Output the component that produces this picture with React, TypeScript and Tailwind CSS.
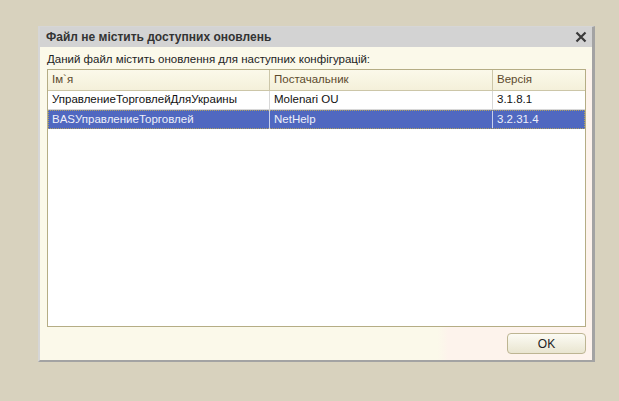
import React from "react";

const rows = [
  { name: "УправлениеТорговлейДляУкраины", vendor: "Molenari OU", ver: "3.1.8.1", sel: false },
  { name: "BASУправлениеТорговлей", vendor: "NetHelp", ver: "3.2.31.4", sel: true },
];

export default function App() {
  return (
    <div
      className="w-[619px] h-[401px] bg-[#d8d2be] pl-[38px] pt-[26px] overflow-hidden"
      style={{ fontFamily: '"Liberation Sans", Arial, sans-serif' }}
    >
      <div className="w-[557px] h-[336px] flex flex-col border-l-2 border-t border-[#d6d6d6] border-r-[3px] border-b-2 border-r-[#a3a3a3] border-b-[#a3a3a3] bg-[#fbf9ea]">
        <div className="h-[20px] shrink-0 bg-[#d3d3d3] flex items-center justify-between pl-[6px] pr-[5px]">
          <span className="text-[12px] font-bold text-[#333333] leading-none">Файл не містить доступних оновлень</span>
          <svg width="12" height="12" viewBox="0 0 12 12">
            <path d="M1.5 1.5 L10.5 10.5 M10.5 1.5 L1.5 10.5" stroke="#3a3a3a" strokeWidth="2.2" />
          </svg>
        </div>
        <div className="flex-1 flex flex-col pr-[6px] pl-[7px] pb-[6px] bg-[linear-gradient(to_right,#fbf9ea_72%,#fdf3ec_74%)]">
          <div className="h-[22px] flex items-center text-[11.5px] text-[#222222] leading-none pt-[4px] bg-[#fbf9ea] -mr-[6px] -ml-[7px] pl-[7px]">
            Даний файл містить оновлення для наступних конфігурацій:
          </div>
          <div className="h-[258px] border border-[#b5ad85] bg-white flex flex-col">
            <div className="h-[21px] flex bg-gradient-to-b from-[#fbf9ea] to-[#f4f0da] border-b border-[#ccc6a8] text-[11.5px] text-[#5c4a2c]">
              <div className="w-[222px] flex items-center pl-[4px] border-r border-[#ccc6a8]">Ім`я</div>
              <div className="w-[223px] flex items-center pl-[4px] border-r border-[#ccc6a8]">Постачальник</div>
              <div className="flex-1 flex items-center pl-[4px]">Версія</div>
            </div>
            {rows.map((r, i) => (
              <div
                key={i}
                className={
                  r.sel
                    ? "h-[19px] flex bg-[#5068c0] text-[#eef0fa] text-[11.5px] outline outline-1 outline-dotted outline-[#b0a060] -outline-offset-1"
                    : "h-[19px] flex bg-white text-[#111111] text-[11.5px] border-b border-[#d8d8d8]"
                }
              >
                <div className={"w-[222px] flex items-center pl-[4px] border-r " + (r.sel ? "border-[#c8d0ec]" : "border-[#d8d8d8]")}>{r.name}</div>
                <div className={"w-[223px] flex items-center pl-[4px] border-r " + (r.sel ? "border-[#c8d0ec]" : "border-[#d8d8d8]")}>{r.vendor}</div>
                <div className="flex-1 flex items-center pl-[4px]">{r.ver}</div>
              </div>
            ))}
          </div>
          <div className="flex-1 flex items-end justify-end">
            <button className="w-[79px] h-[21px] rounded-[4px] border border-[#bdb592] bg-gradient-to-b from-[#fcfbf4] to-[#e9e5d0] text-[12px] text-[#222222] leading-none">
              OK
            </button>
          </div>
        </div>
      </div>
    </div>
  );
}
